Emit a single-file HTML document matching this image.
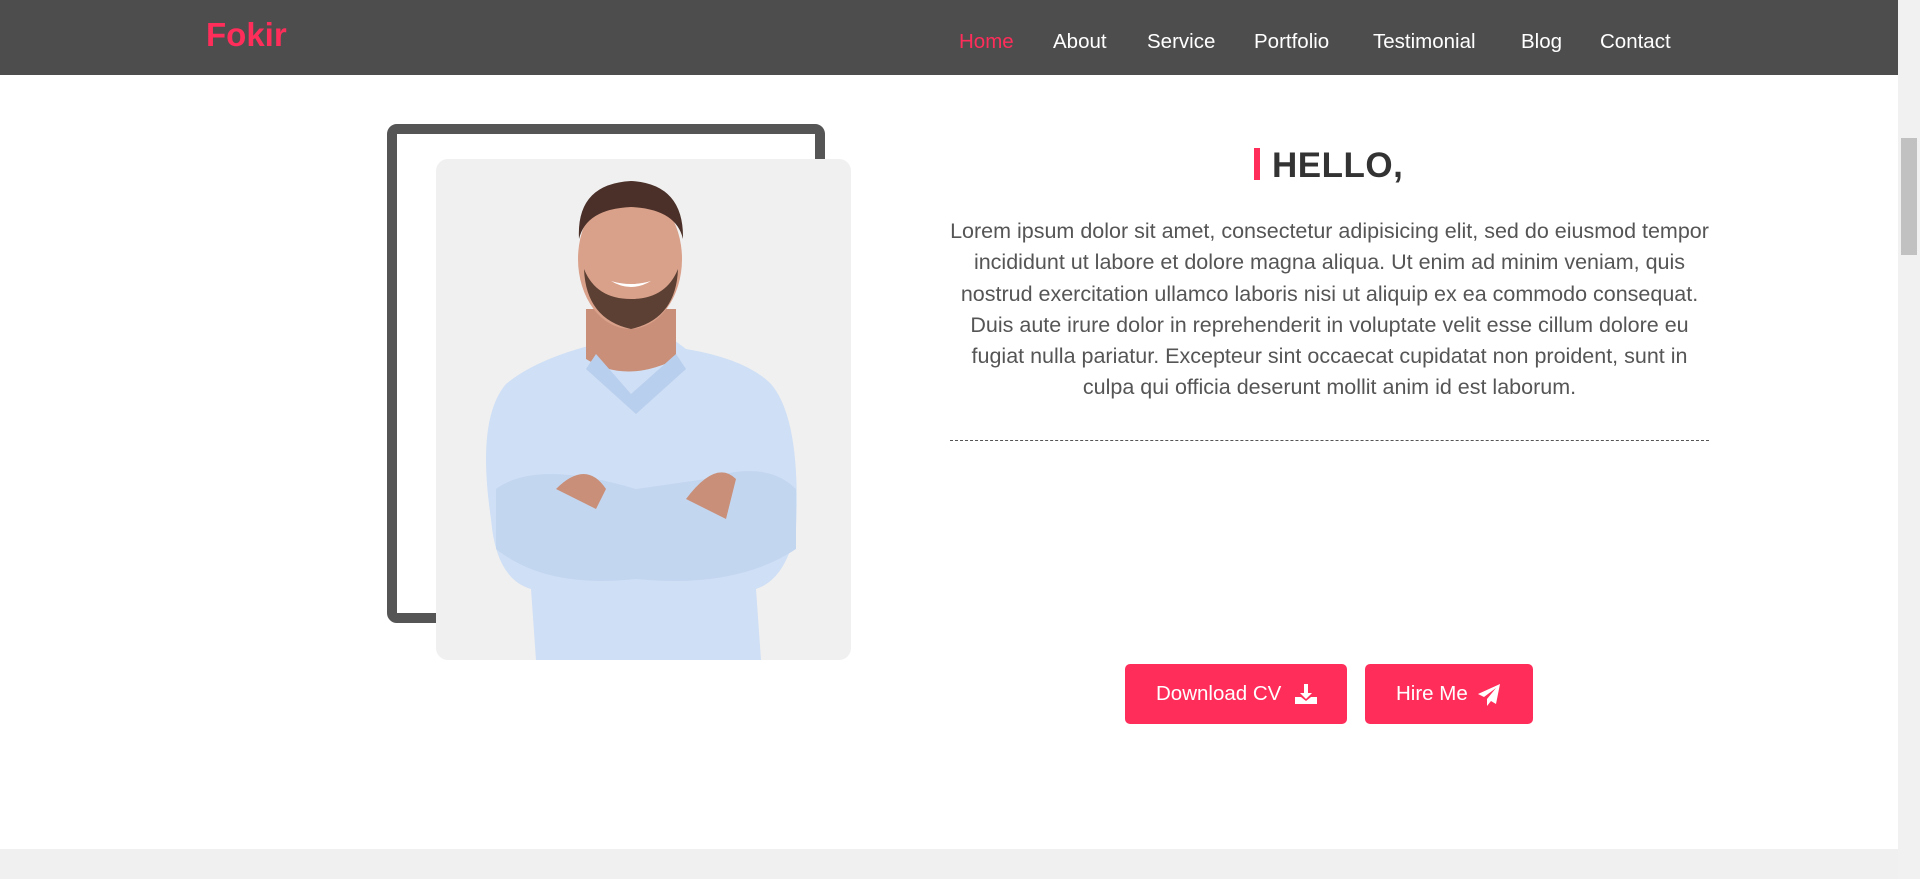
<!DOCTYPE html>
<html><head><meta charset="utf-8"><style>
*{margin:0;padding:0;box-sizing:border-box}
body{width:1920px;height:879px;overflow:hidden;background:#fff;font-family:"Liberation Sans",sans-serif;position:relative}
.hdr{position:absolute;left:0;top:0;width:1898px;height:75px;background:#4d4d4d}
.logo{position:absolute;left:206px;top:16px;color:#ff2d5a;font-size:33px;font-weight:bold}
.nav{position:absolute;top:30px;color:#fff;font-size:20.5px}
.sb{position:absolute;right:0;top:0;width:22px;height:879px;background:#f1f1f1}
.thumb{position:absolute;left:3px;top:138px;width:16px;height:117px;background:#c1c1c1}
.frame{position:absolute;left:387px;top:124px;width:438px;height:499px;border:10px solid #555;border-radius:10px}
.card{position:absolute;left:436px;top:159px;width:415px;height:501px;background:#f0f0f0;border-radius:12px;overflow:hidden}
.hello{position:absolute;left:1254px;top:146px;font-size:35px;font-weight:bold;color:#333;letter-spacing:0.5px}
.hello:before{content:"";display:inline-block;width:6px;height:32px;background:#ff2d5a;margin-right:12px;vertical-align:-3px}
p{position:absolute;left:946px;top:216px;width:767px;text-align:center;font-size:21.5px;line-height:31.3px;color:#555}
.dot{position:absolute;left:950px;top:440px;width:759px;border-top:1px dashed #555}
.btn{position:absolute;top:664px;height:60px;background:#ff2d5a;color:#fff;border-radius:5px;font-size:20.5px;line-height:60px;padding-left:31px}
.band{position:absolute;left:0;top:849px;width:1898px;height:30px;background:#f0f0f0}
</style></head><body>
<div class="hdr">
<div class="logo">Fokir</div>
<span class="nav" style="left:959px;color:#ff2d5a">Home</span>
<span class="nav" style="left:1053px">About</span>
<span class="nav" style="left:1147px">Service</span>
<span class="nav" style="left:1254px">Portfolio</span>
<span class="nav" style="left:1373px">Testimonial</span>
<span class="nav" style="left:1521px">Blog</span>
<span class="nav" style="left:1600px">Contact</span>
</div>
<div class="sb"><div class="thumb"></div></div>
<div class="frame"></div>
<div class="card">
<svg width="415" height="501" viewBox="0 0 415 501">
<path d="M100 501 L95 430 Q60 420 55 360 Q40 260 70 225 Q100 200 160 185 L190 170 L230 175 L250 190 Q310 200 335 225 Q365 260 360 370 Q350 420 320 430 L325 501 Z" fill="#cfdff5"/>
<path d="M60 330 Q100 300 200 330 L270 320 Q330 300 360 330 L360 390 Q300 430 200 420 Q110 430 60 390 Z" fill="#c3d6f0"/>
<path d="M150 150 L150 200 Q190 225 240 200 L240 150 Z" fill="#c98f78"/>
<path d="M160 195 L195 235 L240 195 L250 210 L200 255 L150 210 Z" fill="#b9cfee"/>
<ellipse cx="194" cy="100" rx="52" ry="70" fill="#d9a08a"/>
<path d="M143 80 Q140 25 195 22 Q248 25 247 80 Q240 50 195 48 Q150 50 143 80Z" fill="#4a3028"/>
<path d="M148 110 Q150 160 195 170 Q240 160 242 110 Q230 140 195 140 Q160 140 148 110Z" fill="#5b4033"/>
<path d="M175 122 Q195 134 215 122 Q195 128 175 122Z" fill="#fff"/>
<path d="M120 330 Q150 300 170 330 L160 350 Z M250 340 Q280 300 300 320 L290 360Z" fill="#c98f78"/>
</svg>
</div>
<div class="hello">HELLO,</div>
<p>Lorem ipsum dolor sit amet, consectetur adipisicing elit, sed do eiusmod tempor incididunt ut labore et dolore magna aliqua. Ut enim ad minim veniam, quis nostrud exercitation ullamco laboris nisi ut aliquip ex ea commodo consequat. Duis aute irure dolor in reprehenderit in voluptate velit esse cillum dolore eu fugiat nulla pariatur. Excepteur sint occaecat cupidatat non proident, sunt in culpa qui officia deserunt mollit anim id est laborum.</p>
<div class="dot"></div>
<div class="btn" style="left:1125px;width:222px">Download CV
<svg style="position:absolute;left:170px;top:20px" width="22" height="20" viewBox="0 0 22 20"><path d="M9 0h4v9h4l-6 6-6-6h4z" fill="#fff"/><path d="M0 13h6l5 4 5-4h6v7H0z" fill="#fff"/></svg></div>
<div class="btn" style="left:1365px;width:168px">Hire Me
<svg style="position:absolute;left:113px;top:20px" width="22" height="22" viewBox="0 0 22 22"><path d="M22 0L0 10l6 3 12-9-9 11v7l4-5 5 3z" fill="#fff"/></svg></div>
<div class="band"></div>
</body></html>
